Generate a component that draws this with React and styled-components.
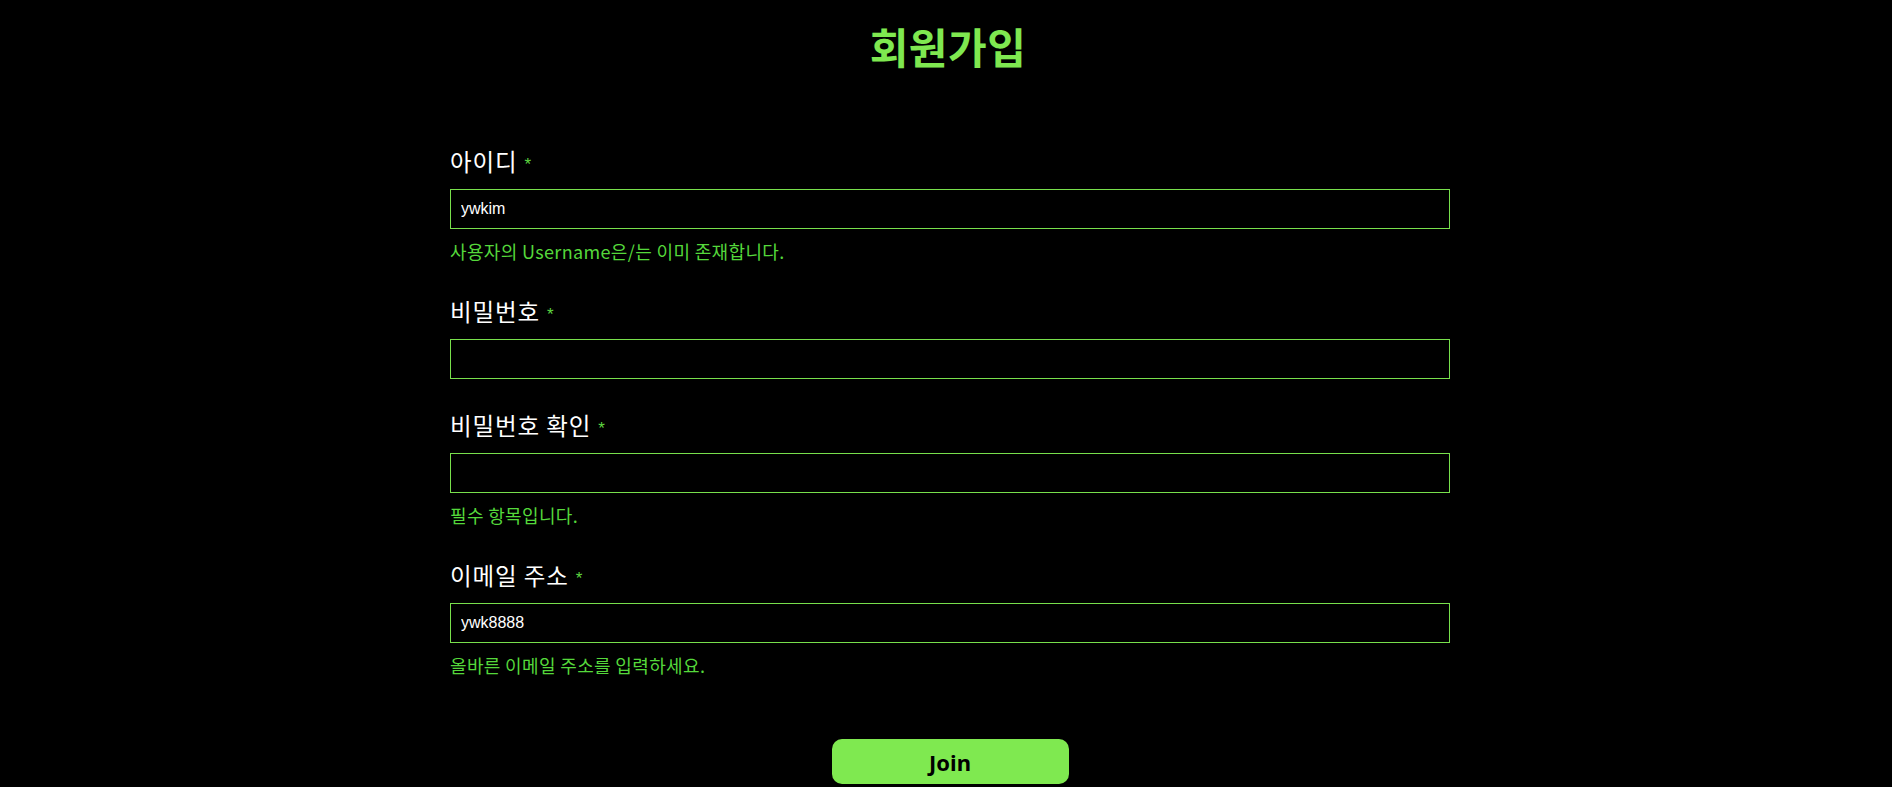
import React from "react";
import styled, { createGlobalStyle } from "styled-components";

const Global = createGlobalStyle`
  html, body {
    margin: 0;
    padding: 0;
    background: #000;
  }
  body {
    font-family: "Noto Sans CJK KR", "Noto Sans", sans-serif;
    color: #fff;
  }
  * { box-sizing: border-box; }
`;

const Page = styled.div`
  min-height: 100vh;
  background: #000;
  padding-bottom: 40px;
`;

const Title = styled.h1`
  margin: 16px 0 0;
  padding-left: 4px;
  text-align: center;
  font-family: "Noto Sans CJK KR", sans-serif;
  font-size: 42px;
  line-height: 60px;
  font-weight: 700;
  letter-spacing: 0.5px;
  color: #7fe850;
`;

const FormWrap = styled.div`
  padding-left: 8px;
`;

const Form = styled.form`
  width: 1000px;
  margin: 0 auto;
  padding-top: 69.5px;
  display: flex;
  flex-direction: column;
  gap: 30.5px;
`;

const Field = styled.div`
  display: flex;
  flex-direction: column;
`;

const Label = styled.label`
  font-family: "Noto Sans CJK KR", sans-serif;
  font-size: 23.5px;
  line-height: 30px;
  letter-spacing: 0.9px;
  color: #fff;
  margin-bottom: 13.5px;
  display: flex;
  align-items: center;
`;

const Required = styled.span`
  color: #5ed640;
  font-family: "Liberation Sans", Arial, sans-serif;
  font-size: 17px;
  margin-left: 7px;
  line-height: 1;
  letter-spacing: 0;
  position: relative;
  top: 4px;
`;

const Input = styled.input`
  width: 1000px;
  height: 40px;
  background: #000;
  border: 1px solid #78e04c;
  border-radius: 0;
  outline: none;
  padding: 0 10px;
  color: #fff;
  font-family: "Liberation Sans", Arial, sans-serif;
  font-size: 16px;
`;

const ErrorText = styled.p`
  margin: 10px 0 2px;
  font-family: "Noto Sans CJK KR", sans-serif;
  font-size: 18px;
  line-height: 24px;
  letter-spacing: 0.35px;
  color: #55d83b;
`;

const ButtonRow = styled.div`
  display: flex;
  justify-content: center;
  margin-top: 29.5px;
`;

const JoinButton = styled.button`
  width: 237px;
  height: 45px;
  border: none;
  border-radius: 10px;
  background: #7fe950;
  color: #000;
  font-family: "Noto Sans", sans-serif;
  font-weight: 700;
  font-size: 22px;
  cursor: pointer;
  padding: 0;
`;

const fields = [
  { label: "아이디", value: "ywkim", error: "사용자의 Username은/는 이미 존재합니다.", type: "text" },
  { label: "비밀번호", value: "", type: "password" },
  { label: "비밀번호 확인", value: "", error: "필수 항목입니다.", type: "password" },
  { label: "이메일 주소", value: "ywk8888", error: "올바른 이메일 주소를 입력하세요.", type: "text" },
];

export default function App() {
  return (
    <Page>
      <Global />
      <Title>회원가입</Title>
      <FormWrap>
        <Form onSubmit={(e) => e.preventDefault()}>
          {fields.map((f) => (
            <Field key={f.label}>
              <Label>
                {f.label}
                <Required>*</Required>
              </Label>
              <Input type={f.type} defaultValue={f.value} />
              {f.error && <ErrorText>{f.error}</ErrorText>}
            </Field>
          ))}
          <ButtonRow>
            <JoinButton type="submit">Join</JoinButton>
          </ButtonRow>
        </Form>
      </FormWrap>
    </Page>
  );
}
